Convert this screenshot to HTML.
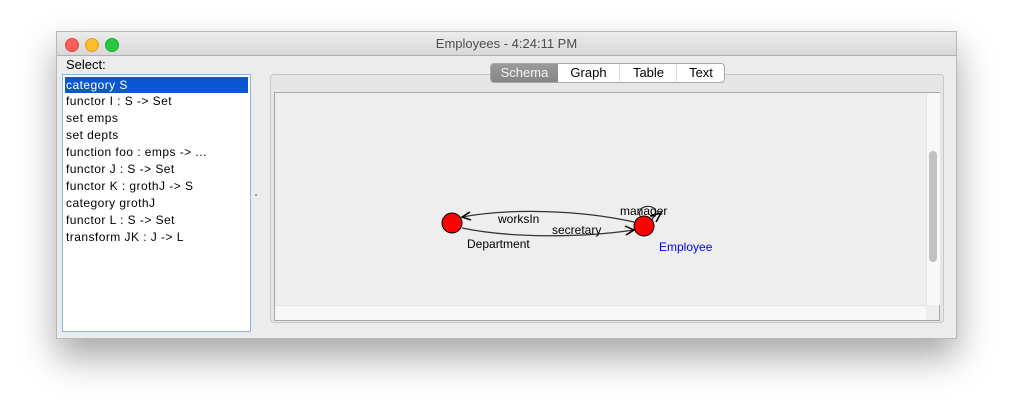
<!DOCTYPE html>
<html><head><style>
body{margin:0;width:1012px;height:419px;background:#fff;position:relative;overflow:hidden;font-family:"Liberation Sans",sans-serif;font-size:12px}
.win{position:absolute;left:56px;top:31px;width:899px;height:306px;background:#ececec;border:1px solid #b8b8b8;box-shadow:0 18px 34px rgba(0,0,0,.35)}
.title{position:absolute;left:0;top:0;width:899px;height:23px;background:linear-gradient(#ececec,#d8d8d8);border-bottom:1px solid #b0b0b0;text-align:center;line-height:23px;color:#4d4d4d;font-size:13px}
.dot{position:absolute;top:6px;width:12px;height:12px;border-radius:50%}
.a{position:absolute}
.list div{height:17px;line-height:17px;padding-left:3px;color:#000;font-size:12px;letter-spacing:0.45px;white-space:nowrap}
.tab{position:absolute;top:0;height:18px;line-height:18px;text-align:center;font-size:13px;border-left:1px solid #ddd}
</style></head><body>
<div class="win">
<div class="title">Employees - 4:24:11 PM
<div class="dot" style="left:8px;background:#fc5f57;border:0.5px solid #de4a42"></div>
<div class="dot" style="left:28px;background:#fdbc2e;border:0.5px solid #dfa024"></div>
<div class="dot" style="left:48px;background:#28c840;border:0.5px solid #1eab2e"></div>
</div>
</div>
<div class="a" style="left:66px;top:57px;font-size:13px">Select:</div>
<div class="a list" style="left:62px;top:74px;width:187px;height:256px;background:#fff;border:1px solid #8cb6e6">
<div style="background:#0a57d0;color:#fff;margin:2px 2px 0 2px;padding-left:1px;height:16px;line-height:16px">category S</div>
<div>functor I : S -&gt; Set</div><div>set emps</div><div>set depts</div><div>function foo : emps -&gt; ...</div><div>functor J : S -&gt; Set</div><div>functor K : grothJ -&gt; S</div><div>category grothJ</div><div>functor L : S -&gt; Set</div><div>transform JK : J -&gt; L</div>
</div>
<div class="a" style="left:255px;top:194px;width:2px;height:2px;background:#999"></div>
<div class="a" style="left:270px;top:74px;width:672px;height:247px;border:1px solid #c8c8c8;border-radius:4px;background:#e6e6e6"></div>
<div class="a" style="left:274px;top:92px;width:664px;height:227px;border:1px solid #a8a8a8;background:#eeeeee"></div>
<div class="a" style="left:926px;top:93px;width:13px;height:212px;background:#f8f8f8;border-left:1px solid #e4e4e4"></div>
<div class="a" style="left:929px;top:151px;width:8px;height:111px;background:#c2c2c2;border-radius:4px"></div>
<div class="a" style="left:275px;top:305px;width:651px;height:14px;background:#f8f8f8;border-top:1px solid #e4e4e4"></div>
<div class="a" style="left:490px;top:63px;width:233px;height:18px;border:1px solid #a8a8a8;border-radius:4px;background:#fff;overflow:hidden">
<div class="tab" style="left:0;width:67px;background:linear-gradient(#9a9a9a,#858585);color:#f4f4f4;border-left:0">Schema</div>
<div class="tab" style="left:67px;width:61px;border-left:0">Graph</div>
<div class="tab" style="left:128px;width:57px">Table</div>
<div class="tab" style="left:185px;width:48px">Text</div>
</div>
<svg class="a" style="left:0;top:0" width="1012" height="419">
<path d="M634,222 C580,210 510,208 462,217" fill="none" stroke="#333" stroke-width="1.3"/>
<path d="M470,212 L462,217 L471,220" fill="none" stroke="#000" stroke-width="1.5"/>
<path d="M462,228 C510,238 580,238 634,230" fill="none" stroke="#333" stroke-width="1.3"/>
<path d="M625,226 L634,230 L626,235" fill="none" stroke="#000" stroke-width="1.5"/>
<path d="M640,216 C636,205 655,203 656,212 L652,220" fill="none" stroke="#333" stroke-width="1.2"/>
<path d="M650,216 L661,213 L656,222" fill="none" stroke="#000" stroke-width="1.5"/>
<circle cx="452" cy="223" r="10" fill="#f00" stroke="#000"/>
<circle cx="644" cy="226" r="10" fill="#f00" stroke="#000"/>
<g font-family="Liberation Sans,sans-serif" font-size="12">
<text x="498" y="223">worksIn</text>
<text x="552" y="234">secretary</text>
<text x="620" y="215">manager</text>
<text x="467" y="248">Department</text>
<text x="659" y="251" fill="#00f">Employee</text>
</g>
</svg>
</body></html>
